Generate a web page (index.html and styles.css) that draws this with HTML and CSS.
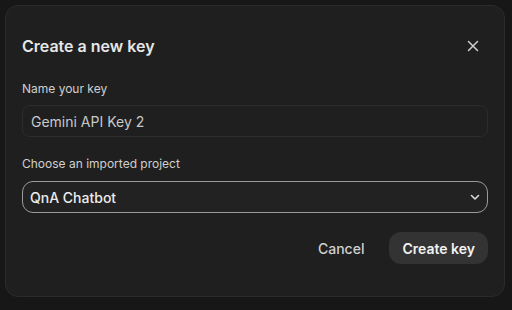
FILE: index.html
```html
<!DOCTYPE html>
<html>
<head>
<meta charset="utf-8">
<link rel="stylesheet" href="styles.css">
</head>
<body>
<div class="dialog">
  <div class="header">
    <h1 class="title">Create a new key</h1>
    <button class="close" aria-label="Close">
      <svg width="14" height="14" viewBox="0 0 14 14"><path d="M2.5 2.5 L11.5 11.5 M11.5 2.5 L2.5 11.5" stroke="#cfcfcf" stroke-width="1.5" stroke-linecap="round"/></svg>
    </button>
  </div>
  <label class="label">Name your key</label>
  <div class="input">Gemini API Key 2</div>
  <label class="label label2">Choose an imported project</label>
  <div class="select">
    <span>QnA Chatbot</span>
    <svg width="12" height="12" viewBox="0 0 12 12"><path d="M2.5 4.5 L6 8 L9.5 4.5" fill="none" stroke="#d8d8d8" stroke-width="1.6" stroke-linecap="round" stroke-linejoin="round"/></svg>
  </div>
  <div class="actions">
    <button class="btn cancel">Cancel</button>
    <button class="btn primary">Create key</button>
  </div>
</div>
</body>
</html>
```

FILE: styles.css
```css
html, body {
  margin: 0;
  padding: 0;
  background: #171717;
  width: 512px;
  height: 310px;
  overflow: hidden;
  font-family: Inter, "Noto Sans", sans-serif;
}
body {
  padding: 5px 0 0 5px;
  box-sizing: border-box;
}
.dialog {
  box-sizing: border-box;
  width: 500px;
  height: 292px;
  background: #1f1f1f;
  border: 1px solid #2b2b2b;
  border-radius: 13px;
  padding: 0 16px 0 16px;
  display: flex;
  flex-direction: column;
}
.header {
  display: flex;
  align-items: center;
  justify-content: space-between;
  height: 40px;
  margin-top: 20px;
}
.title {
  margin: 0;
  font-size: 16px;
  font-weight: 600;
  color: #e6e6e6;
}
.close {
  background: none;
  border: none;
  padding: 0;
  width: 14px;
  height: 14px;
  margin-right: 8px;
  display: flex;
}
.label {
  font-size: 12px;
  color: #cfcfcf;
  margin-top: 15px;
  line-height: 16px;
}
.label2 {
  margin-top: 19px;
}
.input {
  box-sizing: border-box;
  margin-top: 8px;
  height: 32px;
  border: 1px solid #2c2c2c;
  border-radius: 8px;
  padding: 0 8px;
  display: flex;
  align-items: center;
  font-size: 14px;
  color: #c8c8c8;
}
.select {
  box-sizing: border-box;
  margin-top: 9px;
  height: 32px;
  border: 1px solid #9a9a9a;
  border-radius: 11px;
  padding: 0 6px 0 7px;
  display: flex;
  align-items: center;
  justify-content: space-between;
  font-size: 14px;
  font-weight: 500;
  color: #ececec;
  background: #222;
}
.actions {
  display: flex;
  justify-content: flex-end;
  align-items: center;
  gap: 12px;
  margin-top: 19px;
}
.btn {
  font-family: inherit;
  font-size: 14px;
  font-weight: 600;
  border: none;
  height: 32px;
  border-radius: 12px;
  padding: 0 13px;
}
.cancel {
  background: none;
  color: #cfcfcf;
  font-weight: 500;
}
.primary {
  background: #333333;
  color: #f2f2f2;
}
```
